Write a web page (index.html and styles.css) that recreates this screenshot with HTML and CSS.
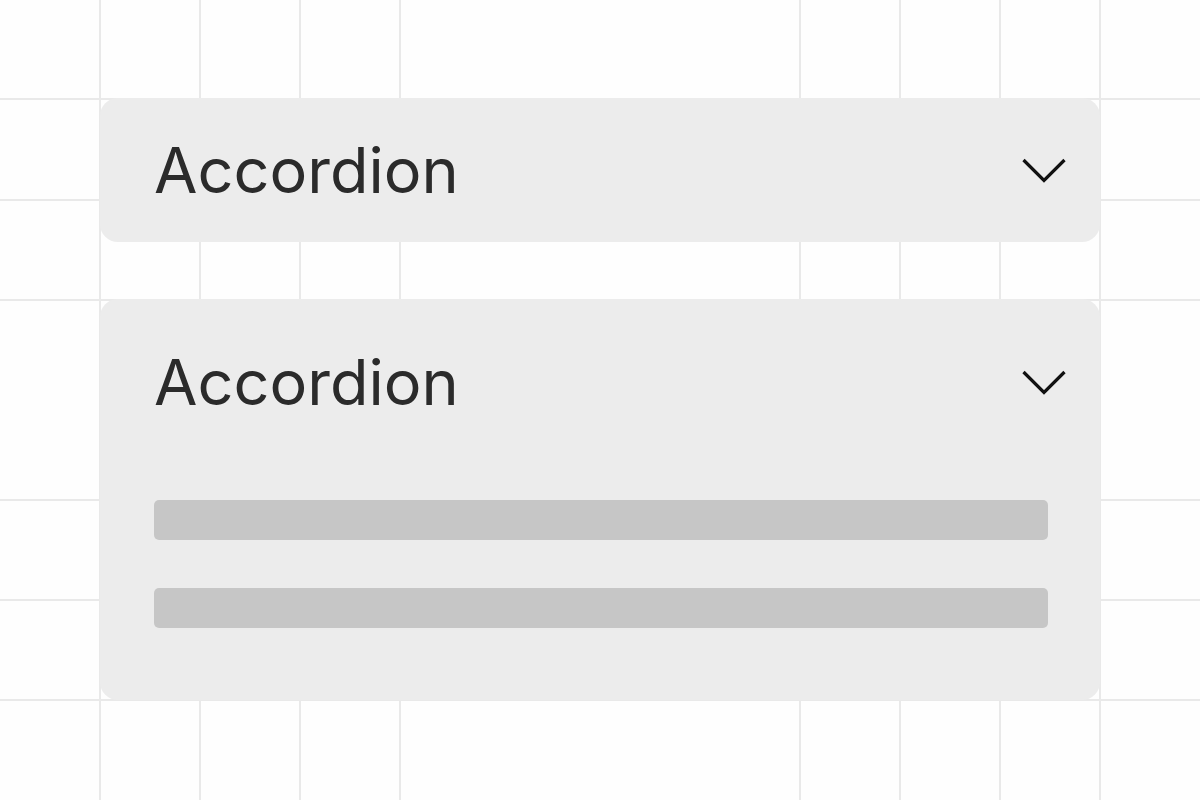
FILE: index.html
```html
<!DOCTYPE html>
<html>
<head>
    <meta charset="UTF-8">
    <meta name="viewport" content="width=device-width, initial-scale=1.0">
    <title>Accordion</title>
    <link rel="stylesheet" href="styles.css">
</head>
<body>
    <div class="accordion">
        <div class="panel">
            <div class="panel-header">
                <span class="panel-title">Accordion</span>
                <svg class="chevron" width="44" height="26" viewBox="0 0 44 26">
                    <polyline points="1.5,2 22,22.5 42.5,2" />
                </svg>
            </div>
        </div>

        <div class="panel open">
            <div class="panel-header">
                <span class="panel-title">Accordion</span>
                <svg class="chevron" width="44" height="26" viewBox="0 0 44 26">
                    <polyline points="1.5,2 22,22.5 42.5,2" />
                </svg>
            </div>
            <div class="panel-body">
                <div class="line"></div>
                <div class="line"></div>
            </div>
        </div>
    </div>
</body>
</html>
```

FILE: styles.css
```css
body {
    margin: 0;
    height: 800px;
    box-sizing: border-box;
    padding: 98px 0 0 100px;
    font-family: Inter, "Noto Sans", sans-serif;
    background-color: #fefefe;
    /* background grid, 100px cells, centre columns left empty */
    background-image:
        linear-gradient(#e9e9e9, #e9e9e9),
        linear-gradient(#e9e9e9, #e9e9e9),
        linear-gradient(#e9e9e9, #e9e9e9),
        linear-gradient(#e9e9e9, #e9e9e9),
        linear-gradient(#e9e9e9, #e9e9e9),
        linear-gradient(#e9e9e9, #e9e9e9),
        linear-gradient(#e9e9e9, #e9e9e9),
        linear-gradient(#e9e9e9, #e9e9e9),
        linear-gradient(#e9e9e9, #e9e9e9),
        linear-gradient(#e9e9e9, #e9e9e9),
        linear-gradient(#e9e9e9, #e9e9e9),
        linear-gradient(#e9e9e9, #e9e9e9),
        linear-gradient(#e9e9e9, #e9e9e9),
        linear-gradient(#e9e9e9, #e9e9e9);
    background-repeat: no-repeat;
    background-size:
        2px 100%, 2px 100%, 2px 100%, 2px 100%,
        2px 100%, 2px 100%, 2px 100%, 2px 100%,
        100% 2px, 100% 2px, 100% 2px,
        100% 2px, 100% 2px, 100% 2px;
    background-position:
        99px 0, 199px 0, 299px 0, 399px 0,
        799px 0, 899px 0, 999px 0, 1099px 0,
        0 98px, 0 199px, 0 299px,
        0 499px, 0 599px, 0 699px;
}

.accordion {
    width: 1000px;
    display: flex;
    flex-direction: column;
    gap: 57px;
}

.panel {
    background: #ececec;
    border-radius: 18px;
}

.panel-header {
    display: flex;
    align-items: center;
    justify-content: space-between;
    height: 144px;
    padding: 0 34px 0 54px;
}

.panel.open .panel-header {
    height: 86px;
    padding-top: 40px;
}

.panel-title {
    font-size: 63px;
    line-height: 86px;
    color: #2b2b2b;
}

.chevron {
    display: block;
    margin-top: 2px;
}

.chevron polyline {
    fill: none;
    stroke: #111;
    stroke-width: 3.2;
}

.panel-body {
    display: flex;
    flex-direction: column;
    gap: 48px;
    padding: 75px 52px 72px 54px;
}

.line {
    height: 40px;
    background: #c6c6c6;
    border-radius: 5px;
}
```
